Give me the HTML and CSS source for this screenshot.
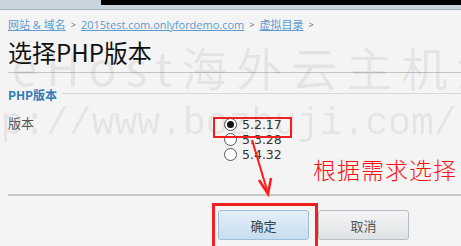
FILE: index.html
```html
<!DOCTYPE html>
<html lang="zh">
<head>
<meta charset="utf-8">
<link rel="stylesheet" href="styles.css">
</head>
<body>
<div class="topbar"><div class="topbar-left"></div><div class="topbar-right"></div></div>
<div class="page">
  <nav class="crumbs">
    <a href="#">网站 &amp; 域名</a><span class="sep">&gt;</span><a href="#">2015test.com.onlyfordemo.com</a><span class="sep">&gt;</span><a href="#">虚拟目录</a><span class="sep">&gt;</span>
  </nav>
  <h1 class="title">选择PHP版本</h1>
  <div class="legend"><span class="legend-text">PHP版本</span><span class="legend-line"></span></div>
  <div class="field">
    <div class="field-label">版本</div>
    <div class="options">
      <label class="opt"><span class="radio checked"></span>5.2.17</label>
      <label class="opt"><span class="radio"></span>5.3.28</label>
      <label class="opt"><span class="radio"></span>5.4.32</label>
    </div>
  </div>
  <div class="rule"></div>
  <div class="buttons">
    <button class="btn btn-ok">确定</button>
    <button class="btn btn-cancel">取消</button>
  </div>
</div>

<div class="wm-layer">
  <div class="watermark wm1">jeHost海外云主机测评</div>
  <div class="watermark wm2">http://www.bozhuji.com/</div>
</div>

<div class="mark mark-radio"></div>
<div class="mark mark-btn"></div>
<svg class="arrow" width="461" height="246" viewBox="0 0 461 246">
  <line x1="252" y1="140" x2="267" y2="190" stroke="#ff1a1a" stroke-width="2"/>
  <polyline points="259,180 268,194 271,178" fill="none" stroke="#ff1a1a" stroke-width="2.5"/>
</svg>
<div class="note">根据需求选择</div>
</body>
</html>
```
FILE: styles.css
```css
html, body { margin: 0; padding: 0; }
body {
  width: 461px; height: 246px; overflow: hidden;
  background: #f4f4f4;
  font-family: "Noto Sans CJK SC", "Noto Sans", sans-serif;
  color: #333;
  position: relative;
}
.topbar { display: flex; height: 9px; border-bottom: 1px solid #a9b1b6; background: #c9d5dc; }
.topbar-left { width: 101px; }
.topbar-right { flex: 1; height: 5px; background: #000; }

.page { padding: 0 0 0 8px; }
.crumbs {
  margin-top: 8px; height: 14px; line-height: 14px;
  font-family: "Open Sans", "Noto Sans CJK SC", sans-serif;
  font-size: 11px; color: #777;
  display: flex; align-items: center;
}
.crumbs a { color: #5b9bcf; text-decoration: underline; }
.crumbs .sep { margin: 0 5px; font-size: 9px; color: #666; }

.title {
  margin: 6px 0 0; font-size: 24px; font-weight: normal; line-height: 28px;
  color: #111; letter-spacing: 0;
  padding-bottom: 6px; border-bottom: 1px solid #c4c4c4;
}

.legend { display: flex; align-items: center; margin-top: 14px; height: 16px; }
.legend-text { color: #2f7cb8; font-size: 12px; font-weight: bold; line-height: 16px; }
.legend-line { flex: 1; height: 1px; background: #d8d8d8; margin-left: 5px; margin-top: -4px; }

.field { display: flex; margin-top: 14px; }
.field-label { width: 216px; font-size: 13px; color: #555; line-height: 16px; margin-top: -2px; }
.options { display: flex; flex-direction: column; }
.opt {
  display: flex; align-items: center; height: 15px;
  font-family: "DejaVu Sans", sans-serif; font-size: 12.5px; color: #333;
}
.radio {
  width: 11px; height: 11px; border: 1px solid #555; border-radius: 50%;
  background: #fff; margin-right: 5px; box-sizing: content-box; position: relative;
}
.radio.checked::after {
  content: ""; position: absolute; left: 2px; top: 2px; width: 7px; height: 7px;
  border-radius: 50%; background: #111;
}

.rule { margin-top: 32px; height: 2px; background: #c8c8c8; }

.buttons { display: flex; gap: 9px; padding-left: 210px; margin-top: 14px; }
.btn {
  width: 91px; height: 30px; border-radius: 3px; font-size: 13px;
  font-family: "Noto Sans CJK SC", sans-serif;
}
.btn-ok { border: 1px solid #9dbfdc; background: linear-gradient(#e4eff8, #c7ddf0); color: #2b3f55; }
.btn-cancel { border: 1px solid #b6bcc2; background: linear-gradient(#f3f4f5, #dfe2e5); color: #555; }

.wm-layer { position: absolute; left: 0; top: 0; width: 461px; height: 246px; overflow: hidden; pointer-events: none; }
.watermark { position: absolute; color: rgba(0,0,0,0.075); white-space: nowrap; }
.wm1 { left: -10px; top: 36px; font-size: 46px; letter-spacing: 9px; font-family: "Noto Sans CJK SC", sans-serif; line-height: 60px; }
.wm2 { left: -68px; top: 99px; font-size: 38px; font-family: "Liberation Mono", monospace; line-height: 50px; }

.mark { position: absolute; border: 2px solid #f02020; pointer-events: none; }
.mark-radio { left: 213px; top: 117px; width: 75px; height: 17px; }
.mark-btn { left: 212px; top: 203px; width: 100px; height: 43px; border-width: 3px; border-bottom: 0; }
.arrow { position: absolute; left: 0; top: 0; pointer-events: none; }
.note {
  position: absolute; left: 313px; top: 153px; font-size: 23px; letter-spacing: 1px;
  color: #ff1010; font-family: "Noto Sans CJK SC", sans-serif; font-weight: 300; line-height: 32px;
}
```
